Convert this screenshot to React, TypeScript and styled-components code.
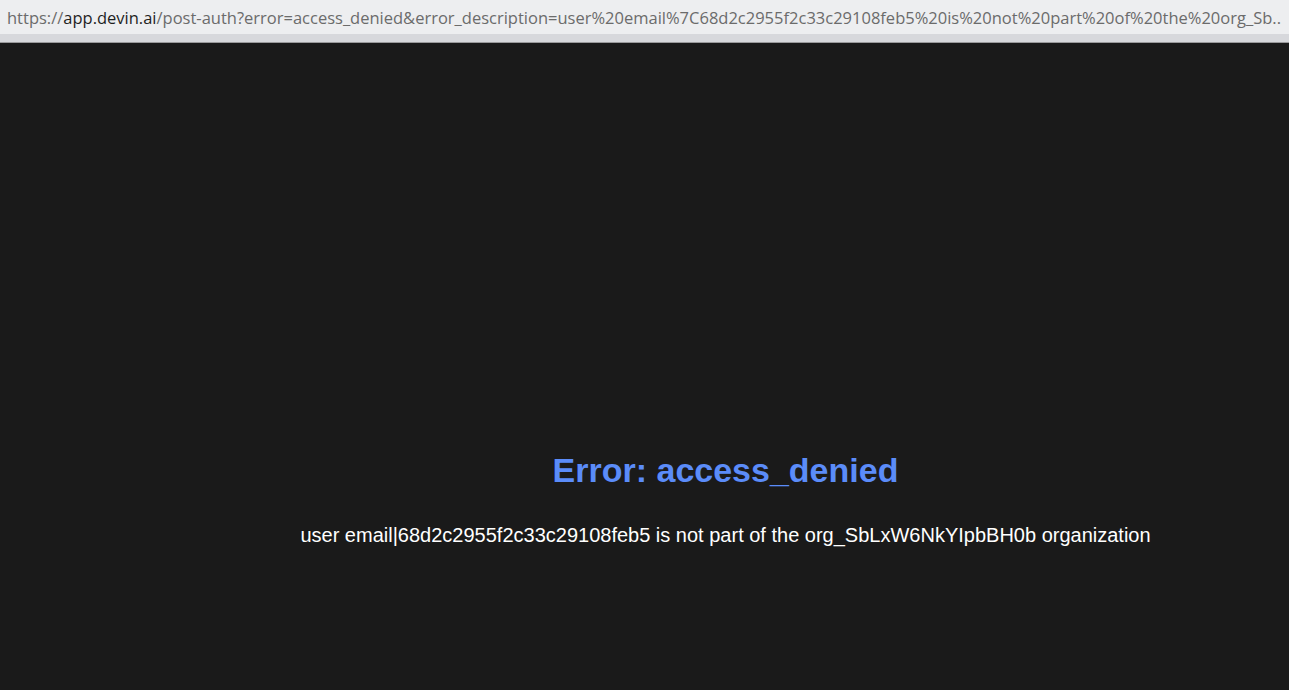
import styled, { createGlobalStyle } from "styled-components";

const GlobalStyle = createGlobalStyle`
  html, body {
    margin: 0;
    padding: 0;
    height: 100%;
    background: #1a1a1a;
  }
  #root {
    height: 100%;
  }
`;

const Screen = styled.div`
  display: flex;
  flex-direction: column;
  height: 690px;
  overflow: hidden;
`;

const AddressBar = styled.div`
  height: 34px;
  display: flex;
  align-items: center;
  padding: 0 2px 0 7px;
  background: #edeef0;
  font-family: "Open Sans", "Noto Sans", sans-serif;
  font-size: 16.5px;
  color: #6b6b6b;
  white-space: nowrap;
  overflow: hidden;
`;

const UrlText = styled.span`
  overflow: hidden;
  text-overflow: ellipsis;
`;

const Host = styled.span`
  color: #1f1f1f;
`;

const BarEdge = styled.div`
  height: 8px;
  background: #d7d8dc;
  border-bottom: 1px solid #9a9a9c;
`;

const Page = styled.main`
  flex: 1;
  display: flex;
  flex-direction: column;
  align-items: center;
  padding: 408px 0 0 162px;
  background: #1a1a1a;
  font-family: "Liberation Sans", Arial, sans-serif;
`;

const Heading = styled.h1`
  margin: 0;
  font-size: 34px;
  font-weight: 700;
  color: #5b8cf9;
`;

const Message = styled.p`
  margin: 34px 0 0;
  font-size: 20px;
  color: #ffffff;
`;

export default function App() {
  return (
    <>
      <GlobalStyle />
      <Screen>
        <AddressBar>
          <UrlText>
            https://<Host>app.devin.ai</Host>
            /post-auth?error=access_denied&amp;error_description=user%20email%7C68d2c2955f2c33c29108feb5%20is%20not%20part%20of%20the%20org_Sb..
          </UrlText>
        </AddressBar>
        <BarEdge />
        <Page>
          <Heading>Error: access_denied</Heading>
          <Message>
            user email|68d2c2955f2c33c29108feb5 is not part of the
            org_SbLxW6NkYIpbBH0b organization
          </Message>
        </Page>
      </Screen>
    </>
  );
}
